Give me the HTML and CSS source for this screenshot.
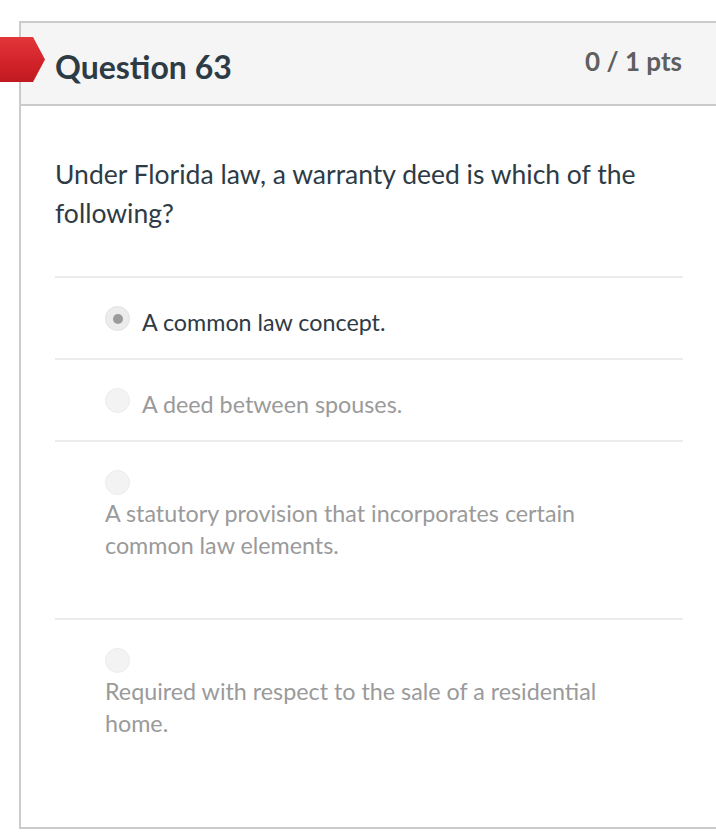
FILE: index.html
```html
<!DOCTYPE html>
<html lang="en">
<head>
<meta charset="utf-8">
<title>Question 63</title>
<link rel="stylesheet" href="styles.css">
</head>
<body>
<div class="card">
  <div class="flag"></div>
  <div class="card-header">
    <h2 class="title">Question 63</h2>
    <div class="points">0 / 1 pts</div>
  </div>
  <div class="card-body">
    <p class="question">Under Florida law, a warranty deed is which of the following?</p>
    <div class="answers">
      <div class="answer">
        <span class="radio radio--checked"><span class="dot"></span></span>
        <span class="answer-text answer-text--selected">A common law concept.</span>
      </div>
      <div class="answer">
        <span class="radio"></span>
        <span class="answer-text">A deed between spouses.</span>
      </div>
      <div class="answer answer--long">
        <span class="radio"></span>
        <span class="answer-text">A statutory provision that incorporates certain common law elements.</span>
      </div>
      <div class="answer answer--long answer--last">
        <span class="radio"></span>
        <span class="answer-text">Required with respect to the sale of a residential home.</span>
      </div>
    </div>
  </div>
</div>
</body>
</html>
```
FILE: styles.css
```css
* { box-sizing: border-box; }
html, body { margin: 0; padding: 0; background: #ffffff; }
body {
  font-family: Lato, "Open Sans", "Liberation Sans", sans-serif;
  color: #2d3b45;
  width: 716px;
  height: 840px;
  overflow: hidden;
}
.card {
  position: relative;
  margin: 21px 0 0 19px;
  width: 700px;
  border: 2px solid #cbcbcb;
}
.flag {
  position: absolute;
  left: -21px;
  top: 14px;
  width: 45px;
  height: 45px;
  background: linear-gradient(180deg, #e2373a 0%, #d2232a 55%, #c01a20 100%);
  clip-path: polygon(0 0, 33px 0, 45px 22.5px, 33px 45px, 0 45px);
}
.card-header {
  display: flex;
  justify-content: space-between;
  align-items: flex-start;
  height: 83px;
  padding: 25px 35px 0 34px;
  background: #f5f5f5;
  border-bottom: 2px solid #cbcbcb;
}
.title {
  margin: 0;
  font-size: 32px;
  line-height: 1.2;
  font-weight: 700;
  color: #2d3b45;
}
.points {
  margin-top: -2px;
  font-size: 26px;
  line-height: 1.2;
  font-weight: 700;
  color: #5f5f5f;
}
.card-body {
  padding: 49px 34px 88px 34px;
}
.question {
  margin: 0 0 43px 0;
  font-size: 26.5px;
  line-height: 39px;
  color: #2d3b45;
}
.answer {
  display: flex;
  flex-wrap: wrap;
  align-items: flex-start;
  column-gap: 12px;
  row-gap: 2px;
  padding: 28px 50px 20px 50px;
  border-top: 2px solid #ececec;
}
.answer--long { padding-bottom: 57px; }
.answer--last { padding-bottom: 0; }
.radio {
  flex: 0 0 25px;
  width: 25px;
  height: 25px;
  border-radius: 50%;
  background: #f3f3f3;
  border: 1px solid #ececec;
  display: flex;
  align-items: center;
  justify-content: center;
}
.radio--checked {
  background: #ececec;
  border-color: #e2e2e2;
}
.dot {
  width: 10px;
  height: 10px;
  border-radius: 50%;
  background: #9b9b9b;
}
.answer-text {
  flex: 0 1 auto;
  font-size: 23.3px;
  line-height: 32px;
  color: #9a9a9a;
}
.answer-text--selected { color: #2d3b45; }
```
